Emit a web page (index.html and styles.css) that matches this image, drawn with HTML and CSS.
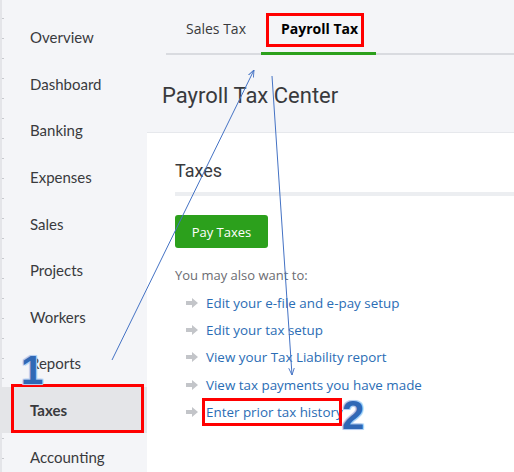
FILE: index.html
```html
<!DOCTYPE html>
<html>
<head>
<meta charset="utf-8">
<link rel="stylesheet" href="styles.css">
</head>
<body>
<div class="app">
  <nav class="sidebar">
    <div class="nav-item">Overview</div>
    <div class="nav-item">Dashboard</div>
    <div class="nav-item">Banking</div>
    <div class="nav-item">Expenses</div>
    <div class="nav-item">Sales</div>
    <div class="nav-item">Projects</div>
    <div class="nav-item">Workers</div>
    <div class="nav-item">Reports</div>
    <div class="nav-item active">Taxes</div>
    <div class="nav-item">Accounting</div>
  </nav>
  <main class="main">
    <div class="tabs">
      <div class="tab">Sales Tax</div>
      <div class="tab selected">Payroll Tax</div>
    </div>
    <h1 class="page-title">Payroll Tax Center</h1>
    <section class="card">
      <h2 class="card-title">Taxes</h2>
      <div class="divider"></div>
      <button class="btn-green">Pay Taxes</button>
      <p class="also">You may also want to:</p>
      <ul class="links">
        <li><svg class="arr" viewBox="0 0 12 10"><polygon points="0,3 6,3 6,0 12,5 6,10 6,7 0,7" /></svg><a>Edit your e-file and e-pay setup</a></li>
        <li><svg class="arr" viewBox="0 0 12 10"><polygon points="0,3 6,3 6,0 12,5 6,10 6,7 0,7" /></svg><a>Edit your tax setup</a></li>
        <li><svg class="arr" viewBox="0 0 12 10"><polygon points="0,3 6,3 6,0 12,5 6,10 6,7 0,7" /></svg><a>View your Tax Liability report</a></li>
        <li><svg class="arr" viewBox="0 0 12 10"><polygon points="0,3 6,3 6,0 12,5 6,10 6,7 0,7" /></svg><a>View tax payments you have made</a></li>
        <li><svg class="arr" viewBox="0 0 12 10"><polygon points="0,3 6,3 6,0 12,5 6,10 6,7 0,7" /></svg><a>Enter prior tax history</a></li>
      </ul>
    </section>
  </main>
</div>

<div class="box box-tab"></div>
<div class="box box-taxes"></div>
<div class="box box-history"></div>
<div class="num num-1">1</div>
<div class="num num-2">2</div>
<svg class="arrows" width="514" height="472" viewBox="0 0 514 472">
  <defs>
    <marker id="head" viewBox="0 0 10 10" refX="10" refY="5" markerWidth="7" markerHeight="7" orient="auto">
      <polyline points="0,1 10,5 0,9" fill="none" stroke="#4472c4" stroke-width="1.3"/>
    </marker>
  </defs>
  <line x1="112" y1="360" x2="254" y2="70" stroke="#4472c4" stroke-width="1" marker-end="url(#head)"/>
  <line x1="272" y1="76" x2="292" y2="375" stroke="#4472c4" stroke-width="1" marker-end="url(#head)"/>
</svg>
</body>
</html>
```

FILE: styles.css
```css
* { box-sizing: border-box; }
html, body { margin: 0; padding: 0; }
body {
  width: 514px;
  height: 472px;
  overflow: hidden;
  background: #f4f5f8;
  font-family: "Lato", "Open Sans", sans-serif;
  color: #393a3d;
  position: relative;
}
.app {
  display: flex;
  height: 472px;
}
.sidebar {
  width: 147px;
  flex: none;
  padding-top: 14px;
  border-left: 2px solid #e4e5e9;
  background-image: repeating-linear-gradient(to bottom, transparent 0, transparent 18px, #c8cacf 18px, #c8cacf 19px, transparent 19px, transparent 20px);
  background-size: 2px 100%;
  background-repeat: no-repeat;
  background-color: #f4f5f8;
}
.nav-item {
  height: 46.6px;
  display: flex;
  align-items: center;
  padding-left: 28px;
  font-size: 15px;
  color: #393a3d;
}
.nav-item.active {
  background: #e4e5e8;
  font-weight: 700;
  margin-left: -2px;
  padding-left: 30px;
}
.main {
  flex: 1;
  display: flex;
  flex-direction: column;
  min-width: 0;
}
.tabs {
  display: flex;
  margin-left: 19px;
  height: 55px;
  border-bottom: 2px solid #d9dbe0;
  align-items: stretch;
  font-family: "Open Sans", sans-serif;
}
.tab {
  padding: 4px 15px 0 20px;
  display: flex;
  align-items: center;
  font-size: 14px;
  color: #393a3d;
  margin-bottom: -2px;
  border-bottom: 3px solid transparent;
}
.tab.selected {
  font-weight: 700;
  color: #000;
  border-bottom-color: #2ca01c;
  padding: 4px 18px 0 20px;
}
.page-title {
  margin: 0;
  padding: 28px 0 0 15px;
  height: 77px;
  font-family: "Roboto", sans-serif;
  font-weight: 400;
  font-size: 22px;
  color: #393a3d;
}
.card {
  flex: 1;
  background: #fff;
  border-top: 1px solid #e6e8ec;
  padding: 27px 0 0 28px;
}
.card-title {
  margin: 0;
  font-family: "Roboto", sans-serif;
  font-weight: 400;
  font-size: 18px;
  color: #393a3d;
  line-height: 22px;
}
.divider {
  margin-top: 10px;
  height: 4px;
  background: #eceef1;
}
.btn-green {
  margin-top: 19px;
  width: 93px;
  height: 33px;
  background: #2ca01c;
  border: none;
  border-radius: 3px;
  color: #fff;
  font-family: "Open Sans", sans-serif;
  font-size: 13px;
  padding: 0;
}
.also {
  margin: 17px 0 0 0;
  font-family: "Open Sans", sans-serif;
  font-size: 13px;
  color: #6b6c72;
  line-height: 20px;
}
.links {
  list-style: none;
  margin: 4px 0 0 0;
  padding: 0 0 0 11px;
  font-family: "Open Sans", sans-serif;
  font-size: 13.4px;
}
.links li {
  display: flex;
  align-items: center;
  height: 27.3px;
}
.arr {
  width: 12px;
  height: 10px;
  fill: #c3c5c9;
  margin-right: 8px;
  flex: none;
}
.links a {
  color: #2a6db5;
  white-space: nowrap;
}
.box {
  position: absolute;
  border: 3px solid #ff0000;
}
.box-tab { left: 266px; top: 13px; width: 98px; height: 34px; }
.box-taxes { left: 11px; top: 384px; width: 133px; height: 49px; }
.box-history { left: 202px; top: 398px; width: 140px; height: 28px; }
.num {
  position: absolute;
  font-family: "Liberation Sans", sans-serif;
  font-weight: 700;
  font-size: 40px;
  line-height: 40px;
  color: #3068b5;
  text-shadow: 0 0 2px #a9c6ee, 1px 1px 0 #b7d0f2, -1px -1px 0 #b7d0f2, 1px -1px 0 #b7d0f2, -1px 1px 0 #b7d0f2;
}
.num-1 { left: 21px; top: 350px; }
.num-2 { left: 342px; top: 395px; }
.arrows {
  position: absolute;
  left: 0;
  top: 0;
  pointer-events: none;
}
```
